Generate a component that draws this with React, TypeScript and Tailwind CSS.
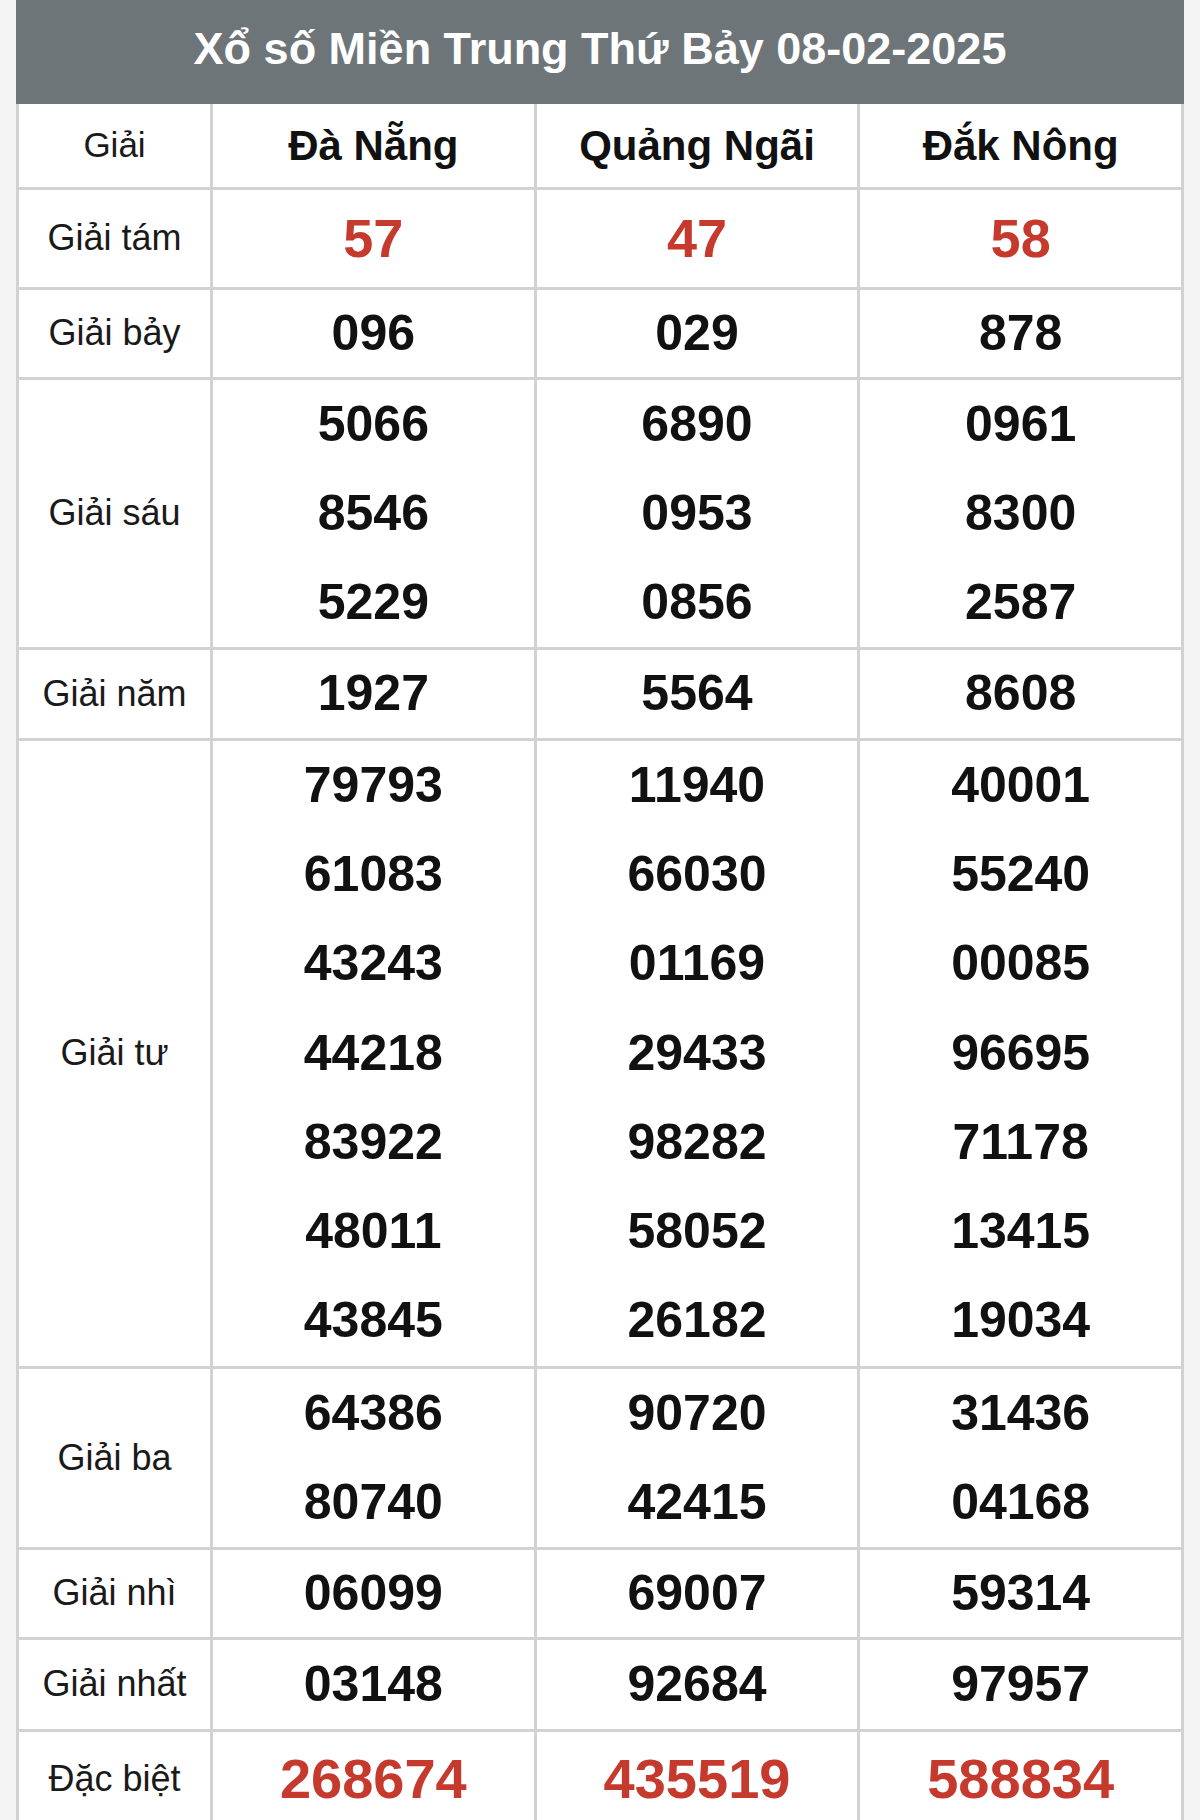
import React from "react";

type Row = {
  label: string;
  values: string[][];
  red?: boolean;
  big?: boolean;
  lineH: string;
};

const provinces = ["Đà Nẵng", "Quảng Ngãi", "Đắk Nông"];

const rows: Row[] = [
  { label: "Giải tám", values: [["57"], ["47"], ["58"]], red: true, lineH: "h-[97px]" },
  { label: "Giải bảy", values: [["096"], ["029"], ["878"]], lineH: "h-[87px]" },
  {
    label: "Giải sáu",
    values: [
      ["5066", "8546", "5229"],
      ["6890", "0953", "0856"],
      ["0961", "8300", "2587"],
    ],
    lineH: "h-[89px]",
  },
  { label: "Giải năm", values: [["1927"], ["5564"], ["8608"]], lineH: "h-[88px]" },
  {
    label: "Giải tư",
    values: [
      ["79793", "61083", "43243", "44218", "83922", "48011", "43845"],
      ["11940", "66030", "01169", "29433", "98282", "58052", "26182"],
      ["40001", "55240", "00085", "96695", "71178", "13415", "19034"],
    ],
    lineH: "h-[89.3px]",
  },
  {
    label: "Giải ba",
    values: [
      ["64386", "80740"],
      ["90720", "42415"],
      ["31436", "04168"],
    ],
    lineH: "h-[89px]",
  },
  { label: "Giải nhì", values: [["06099"], ["69007"], ["59314"]], lineH: "h-[87px]" },
  { label: "Giải nhất", values: [["03148"], ["92684"], ["97957"]], lineH: "h-[89px]" },
  {
    label: "Đặc biệt",
    values: [["268674"], ["435519"], ["588834"]],
    red: true,
    big: true,
    lineH: "h-[94px]",
  },
];

export default function App() {
  return (
    <div className="min-h-[1820px] bg-[#f4f4f4] px-4 font-['Liberation_Sans',Arial,sans-serif]">
      <div className="bg-white">
        <div className="flex h-[104px] items-center justify-center bg-[#6d7579] pb-1.5">
          <h1 className="text-[45px] font-bold text-white">
            Xổ số Miền Trung Thứ Bảy 08-02-2025
          </h1>
        </div>
        <table className="w-full table-fixed border-collapse">
          <colgroup>
            <col className="w-[194px]" />
            <col />
            <col />
            <col />
          </colgroup>
          <thead>
            <tr>
              <th className="h-[84px] border-[3px] border-t-0 border-[#d2d2d2] text-[35px] font-normal text-[#1a1a1a]">
                Giải
              </th>
              {provinces.map((p) => (
                <th
                  key={p}
                  className="border-[3px] border-t-0 border-[#d2d2d2] text-[42px] font-bold text-[#111]"
                >
                  {p}
                </th>
              ))}
            </tr>
          </thead>
          <tbody>
            {rows.map((r) => (
              <tr key={r.label}>
                <td className="border-[3px] border-[#d2d2d2] text-center text-[36px] text-[#1a1a1a]">
                  {r.label}
                </td>
                {r.values.map((vals, i) => (
                  <td key={i} className="border-[3px] border-[#d2d2d2] p-0">
                    {vals.map((v) => (
                      <div
                        key={v}
                        className={`flex items-center justify-center font-bold ${r.lineH} ${
                          r.red ? "text-[#c63a2e]" : "text-[#111]"
                        } ${r.big ? "text-[56px]" : r.red ? "text-[54px]" : "text-[50px]"}`}
                      >
                        {v}
                      </div>
                    ))}
                  </td>
                ))}
              </tr>
            ))}
          </tbody>
        </table>
      </div>
    </div>
  );
}
